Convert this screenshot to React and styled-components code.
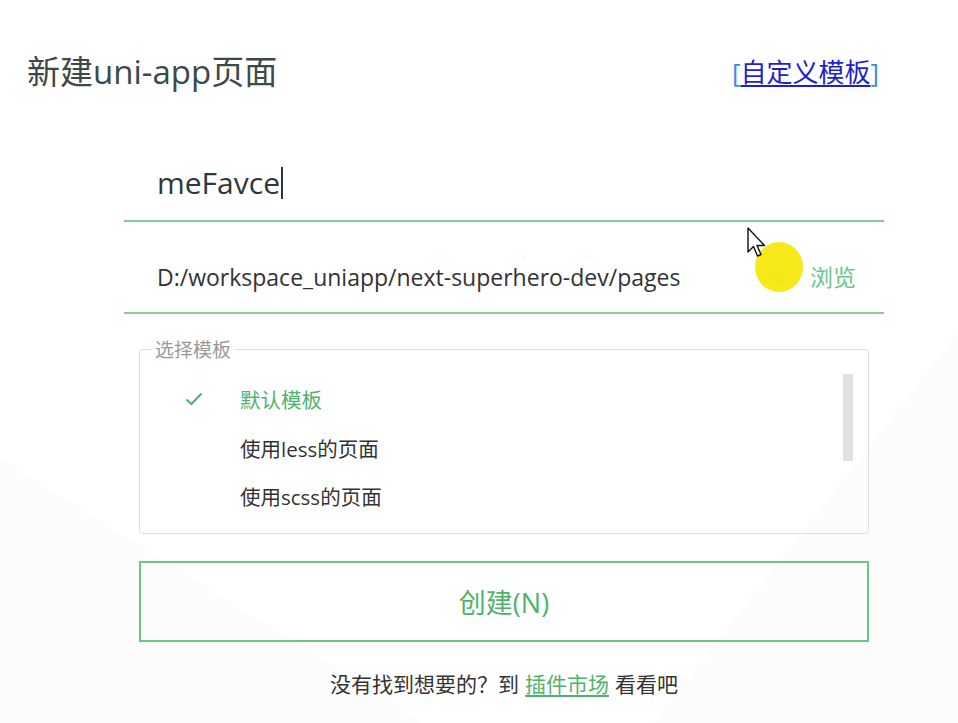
import React from "react";
import styled, { createGlobalStyle } from "styled-components";

const GlobalStyle = createGlobalStyle`
  html, body { margin: 0; padding: 0; background: #ffffff; }
  body { font-family: "Open Sans", "Noto Sans CJK SC", sans-serif; }
  * { box-sizing: border-box; }
`;

const GREEN = "#4fb36c";
const LINE = "#86cf9c";

const Page = styled.div`
  position: relative;
  width: 958px;
  height: 723px;
  overflow: hidden;
  background:
    linear-gradient(128deg, rgba(255,255,255,0) 0 80%, rgba(0,0,0,0.012) 80% 100%),
    linear-gradient(32deg, rgba(0,0,0,0.01) 0 20%, rgba(255,255,255,0) 20% 100%),
    #ffffff;
`;

const Header = styled.header`
  display: flex;
  justify-content: space-between;
  align-items: center;
  padding: 50px 79px 0 27px;
  height: 94px;
`;

const Title = styled.h1`
  margin: 0;
  font-weight: 400;
  font-size: 33px;
  line-height: 44px;
  color: #3b4a46;
`;

const TemplateLink = styled.a`
  font-size: 26px;
  line-height: 32px;
  color: #3b8fd9;
  text-decoration: none;
  cursor: pointer;
`;

const LinkInner = styled.span`
  color: #1f1fd0;
  text-decoration: underline;
  text-underline-offset: 3px;
`;

const Form = styled.div`
  margin: 52px 0 0 124px;
  width: 760px;
`;

const NameRow = styled.div`
  display: flex;
  align-items: center;
  height: 76px;
  padding-left: 33px;
  border-bottom: 2px solid ${LINE};
`;

const NameText = styled.span`
  font-size: 30px;
  line-height: 40px;
  color: #2e3838;
`;

const Caret = styled.span`
  display: inline-block;
  width: 0;
  height: 32px;
  border-left: 2px solid #333;
  margin-left: 1px;
`;

const PathRow = styled.div`
  display: flex;
  align-items: center;
  padding: 40px 28px 20px 33px;
  border-bottom: 2px solid ${LINE};
  position: relative;
`;

const PathText = styled.span`
  flex: 1;
  font-size: 23px;
  line-height: 30px;
  color: #333;
`;

const Chevron = styled.svg`
  width: 12px;
  height: 7px;
  margin-right: 25px;
  margin-top: 6px;
`;

const Browse = styled.span`
  font-size: 23px;
  line-height: 30px;
  color: #6cc58a;
  cursor: pointer;
`;

const Highlight = styled.div`
  position: absolute;
  left: 631px;
  top: 20px;
  width: 48px;
  height: 50px;
  border-radius: 50%;
  background: rgba(246, 230, 0, 0.9);
`;

const Cursor = styled.svg`
  position: absolute;
  left: 623px;
  top: 5px;
  width: 20px;
  height: 32px;
`;

const Fieldset = styled.fieldset`
  margin: 25px 0 0 15px;
  width: 730px;
  height: 195px;
  padding: 0;
  border: 1px solid #dde0e4;
  border-radius: 4px;
`;

const Legend = styled.legend`
  margin-left: 12px;
  padding: 0 3px;
  font-size: 19px;
  line-height: 20px;
  color: #999;
  font-family: "Noto Sans CJK SC", sans-serif;
`;

const ListArea = styled.div`
  display: flex;
  padding-top: 16px;
`;

const List = styled.ul`
  flex: 1;
  list-style: none;
  margin: 0;
  padding: 0;
`;

const Item = styled.li`
  display: flex;
  align-items: center;
  height: 48.5px;
  padding-left: 45px;
  font-size: 20.5px;
  color: ${(p) => (p.$active ? GREEN : "#333")};
`;

const CheckSlot = styled.span`
  width: 55px;
  display: flex;
  align-items: center;
`;

const Scrollbar = styled.div`
  width: 10px;
  height: 87px;
  margin: -1px 15px 0 0;
  background: #e1e1e1;
`;

const CreateButton = styled.button`
  display: block;
  margin: 27px 0 0 15px;
  width: 730px;
  height: 81px;
  background: transparent;
  border: 2px solid #6fc487;
  font-family: "Open Sans", "Noto Sans CJK SC", sans-serif;
  font-size: 27px;
  color: ${GREEN};
  cursor: pointer;
`;

const Footer = styled.p`
  margin: 30px 0 0 15px;
  width: 730px;
  text-align: center;
  font-size: 21px;
  line-height: 24px;
  color: #333;
`;

const MarketLink = styled.a`
  color: ${GREEN};
  text-decoration: underline;
  text-underline-offset: 3px;
  margin: 0 6px;
`;

export default function App() {
  return (
    <>
      <GlobalStyle />
      <Page>
        <Header>
          <Title>新建uni-app页面</Title>
          <TemplateLink>
            [<LinkInner>自定义模板</LinkInner>]
          </TemplateLink>
        </Header>
        <Form>
          <NameRow>
            <NameText>meFavce</NameText>
            <Caret />
          </NameRow>
          <PathRow>
            <PathText>D:/workspace_uniapp/next-superhero-dev/pages</PathText>
            <Chevron viewBox="0 0 12 7">
              <path d="M1 1 L6 6 L11 1" fill="none" stroke="#9a9a9a" strokeWidth="1.2" />
            </Chevron>
            <Browse>浏览</Browse>
            <Highlight />
            <Cursor viewBox="0 0 20 32">
              <path
                d="M1 1 L1 25 L6.5 19.5 L10.5 29 L14 27.5 L10 18.5 L17.5 18.5 Z"
                fill="#fff"
                stroke="#111"
                strokeWidth="1.4"
                strokeLinejoin="round"
              />
            </Cursor>
          </PathRow>
          <Fieldset>
            <Legend>选择模板</Legend>
            <ListArea>
              <List>
                <Item $active>
                  <CheckSlot>
                    <svg width="18" height="14" viewBox="0 0 18 14">
                      <path d="M1.5 7.5 L6.5 12 L16.5 1.5" fill="none" stroke={GREEN} strokeWidth="2" />
                    </svg>
                  </CheckSlot>
                  默认模板
                </Item>
                <Item>
                  <CheckSlot />
                  使用less的页面
                </Item>
                <Item>
                  <CheckSlot />
                  使用scss的页面
                </Item>
              </List>
              <Scrollbar />
            </ListArea>
          </Fieldset>
          <CreateButton>创建(N)</CreateButton>
          <Footer>
            没有找到想要的？到<MarketLink>插件市场</MarketLink>看看吧
          </Footer>
        </Form>
      </Page>
    </>
  );
}
